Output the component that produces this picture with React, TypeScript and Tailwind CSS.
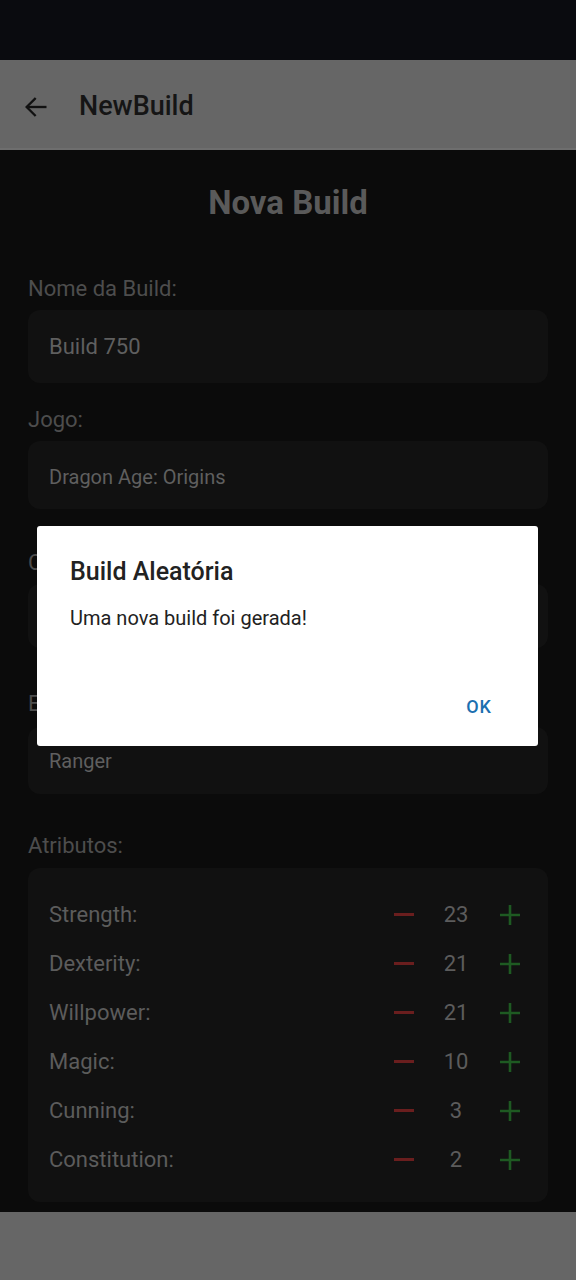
import React from 'react'

const attributes = [
  { name: 'Strength', value: 23 },
  { name: 'Dexterity', value: 21 },
  { name: 'Willpower', value: 21 },
  { name: 'Magic', value: 10 },
  { name: 'Cunning', value: 3 },
  { name: 'Constitution', value: 2 },
]

const Field: React.FC<{
  label: string
  value: string
  boxClass: string
  wrapClass?: string
}> = ({ label, value, boxClass, wrapClass }) => (
  <div className={`flex flex-col ${wrapClass ?? ''}`}>
    <label className="text-[22px] leading-[24px] text-[#4d4d4d] mb-[9px]">{label}</label>
    <div className={`bg-[#111111] rounded-[12px] px-[21px] flex items-center text-[#5f5f5f] ${boxClass}`}>
      {value}
    </div>
  </div>
)

const App: React.FC = () => {
  return (
    <div
      className="relative w-[576px] h-[1280px] bg-[#0b0b0b] flex flex-col overflow-hidden"
      style={{ fontFamily: 'Roboto, "Noto Sans", sans-serif' }}
    >
      {/* status bar */}
      <div className="h-[60px] bg-[#0a0b0f]" />

      {/* header */}
      <div className="h-[90px] bg-[#666666] border-b-[2px] border-[#6e6e6e] flex items-center px-[22px] pt-[5px]">
        <svg width="28" height="28" viewBox="0 0 24 24" fill="none" stroke="#111" strokeWidth="2" strokeLinecap="square">
          <path d="M20 12H5" />
          <path d="M11 5l-7 7 7 7" />
        </svg>
        <span className="ml-[29px] text-[27px] font-medium text-[#151515]">NewBuild</span>
      </div>

      {/* body */}
      <div className="flex-1 flex flex-col px-[28px]">
        <h1 className="text-center text-[33px] font-bold text-[#5a5a5a] mt-[33px] leading-[40px]">
          Nova Build
        </h1>
        <Field label="Nome da Build:" value="Build 750" wrapClass="mt-[54px]" boxClass="h-[73px] text-[22px]" />
        <Field label="Jogo:" value="Dragon Age: Origins" wrapClass="mt-[25px]" boxClass="h-[68px] text-[20px] pt-[3px]" />
        <Field label="Classe:" value="Warrior" wrapClass="mt-[42px]" boxClass="h-[64px] text-[20px]" />
        <Field label="Especialização:" value="Ranger" wrapClass="mt-[44px]" boxClass="h-[67px] text-[20px] mt-[2px]" />

        <label className="text-[22px] leading-[24px] text-[#4d4d4d] mt-[40px] mb-[10px]">Atributos:</label>
        <div className="bg-[#111111] rounded-[12px] pl-[21px] pr-[28px] pt-[22px] pb-[18px] flex flex-col">
          {attributes.map((a) => (
            <div key={a.name} className="h-[49px] flex items-center">
              <span className="flex-1 text-[22px] text-[#5c5c5c]">{a.name}:</span>
              <span className="w-[20px] h-[3px] bg-[#6a1e1e] mr-[23px]" />
              <span className="w-[38px] text-center text-[22px] text-[#5c5c5c]">{a.value}</span>
              <svg className="ml-[25px]" width="20" height="22" viewBox="0 0 20 22">
                <path d="M10 1v20M0 11h20" stroke="#1e5a22" strokeWidth="2.6" />
              </svg>
            </div>
          ))}
        </div>
      </div>

      {/* bottom nav bar */}
      <div className="h-[68px] bg-[#666666]" />

      {/* dialog */}
      <div className="absolute left-[37px] top-[526px] w-[501px] h-[220px] bg-white rounded-[3px] flex flex-col px-[33px] pt-[30px]">
        <div className="text-[25px] font-medium text-[#222] leading-[32px]">Build Aleatória</div>
        <div className="text-[20px] text-[#222] mt-[17px] leading-[26px]">Uma nova build foi gerada!</div>
        <div className="flex-1" />
        <div className="flex justify-end pb-[26px] pr-[13px]">
          <span className="text-[18px] font-medium tracking-[1px] text-[#1b6fb0]">OK</span>
        </div>
      </div>
    </div>
  )
}

export default App
